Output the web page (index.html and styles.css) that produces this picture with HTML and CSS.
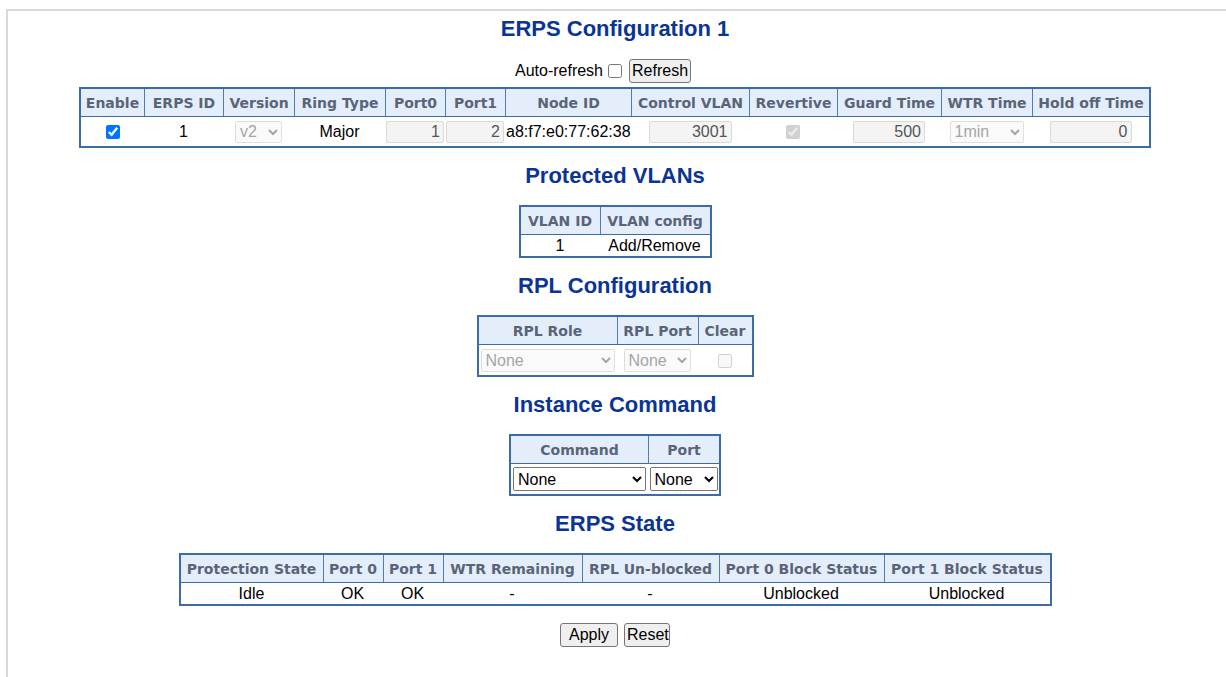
FILE: index.html
```html
<!DOCTYPE html>
<html>
<head>
<meta charset="utf-8">
<title>ERPS Configuration</title>
<link rel="stylesheet" href="styles.css">
</head>
<body>
<div class="frame">
  <h1 class="title">ERPS Configuration 1</h1>
  <div class="refreshbar">
    <span class="lbl">Auto-refresh</span>
    <input type="checkbox" class="cb cb-refresh">
    <button class="btn btn-refresh">Refresh</button>
  </div>

  <table class="grid t-main">
    <thead>
      <tr>
        <th class="c63">Enable</th>
        <th class="c79">ERPS ID</th>
        <th class="c71">Version</th>
        <th class="c91">Ring Type</th>
        <th class="c60">Port0</th>
        <th class="c60">Port1</th>
        <th class="c126">Node ID</th>
        <th class="c118">Control VLAN</th>
        <th class="c88">Revertive</th>
        <th class="c104">Guard Time</th>
        <th class="c91">WTR Time</th>
        <th class="c117">Hold off Time</th>
      </tr>
    </thead>
    <tbody>
      <tr>
        <td><input type="checkbox" class="cb" checked></td>
        <td>1</td>
        <td><select class="sel s-ver" disabled><option>v2</option></select></td>
        <td>Major</td>
        <td><input type="text" class="num n-port" value="1" disabled></td>
        <td><input type="text" class="num n-port" value="2" disabled></td>
        <td>a8:f7:e0:77:62:38</td>
        <td><input type="text" class="num n-vlan" value="3001" disabled></td>
        <td><input type="checkbox" class="cb" checked disabled></td>
        <td><input type="text" class="num n-guard" value="500" disabled></td>
        <td><select class="sel s-wtr" disabled><option>1min</option></select></td>
        <td><input type="text" class="num n-hold" value="0" disabled></td>
      </tr>
    </tbody>
  </table>

  <h1 class="sect">Protected VLANs</h1>
  <table class="grid t-vlan">
    <thead>
      <tr>
        <th class="c79">VLAN ID</th>
        <th class="c110">VLAN config</th>
      </tr>
    </thead>
    <tbody>
      <tr>
        <td>1</td>
        <td>Add/Remove</td>
      </tr>
    </tbody>
  </table>

  <h1 class="sect">RPL Configuration</h1>
  <table class="grid t-rpl">
    <thead>
      <tr>
        <th class="c138">RPL Role</th>
        <th class="c81">RPL Port</th>
        <th class="c54">Clear</th>
      </tr>
    </thead>
    <tbody>
      <tr>
        <td><select class="sel s-role" disabled><option>None</option></select></td>
        <td><select class="sel s-rport" disabled><option>None</option></select></td>
        <td><input type="checkbox" class="cb" disabled></td>
      </tr>
    </tbody>
  </table>

  <h1 class="sect">Instance Command</h1>
  <table class="grid t-cmd">
    <thead>
      <tr>
        <th class="c137">Command</th>
        <th class="c71">Port</th>
      </tr>
    </thead>
    <tbody>
      <tr>
        <td><select class="sel s-cmd"><option>None</option></select></td>
        <td><select class="sel s-cport"><option>None</option></select></td>
      </tr>
    </tbody>
  </table>

  <h1 class="sect">ERPS State</h1>
  <table class="grid t-state">
    <thead>
      <tr>
        <th class="c142">Protection State</th>
        <th class="c60">Port 0</th>
        <th class="c60">Port 1</th>
        <th class="c139">WTR Remaining</th>
        <th class="c137">RPL Un-blocked</th>
        <th class="c165">Port 0 Block Status</th>
        <th class="c166">Port 1 Block Status</th>
      </tr>
    </thead>
    <tbody>
      <tr>
        <td>Idle</td>
        <td>OK</td>
        <td>OK</td>
        <td>-</td>
        <td>-</td>
        <td>Unblocked</td>
        <td>Unblocked</td>
      </tr>
    </tbody>
  </table>

  <div class="actions">
    <button class="btn btn-apply">Apply</button>
    <button class="btn btn-reset">Reset</button>
  </div>
</div>
</body>
</html>
```

FILE: styles.css
```css
html, body {
  margin: 0;
  padding: 0;
  overflow: hidden;
  background: #ffffff;
}

body {
  font-family: "Liberation Sans", Arial, sans-serif;
  font-size: 16px;
  color: #000000;
}

.frame {
  margin: 9px 0 0 6px;
  width: 1214px;
  height: 666px;
  padding-right: 4px;
  border-top: 2px solid #d9d9d9;
  border-left: 2px solid #d9d9d9;
}

h1 {
  font-family: "Liberation Sans", Arial, sans-serif;
  font-weight: bold;
  font-size: 22px;
  line-height: 26px;
  color: #0a3495;
  text-align: center;
}

.title {
  margin: 5px 0 0 0;
}

.sect {
  margin: 15px 0 16px 0;
}

.refreshbar {
  display: flex;
  justify-content: center;
  align-items: center;
  height: 24px;
  margin: 17px 0 4px 0;
  padding-right: 24px;
}

.refreshbar .lbl {
  margin-right: 5px;
}

.cb {
  width: 14px;
  height: 14px;
  margin: 0;
  vertical-align: middle;
}

.cb-refresh {
  margin-right: 7px;
}

.btn {
  font-family: "Liberation Sans", Arial, sans-serif;
  font-size: 16px;
  color: #000000;
  background: #efefef;
  border: 1px solid #767676;
  border-radius: 3px;
  height: 24px;
  padding: 0 2px;
  margin: 0;
  line-height: 20px;
}

.btn-refresh { width: 62px; }
.btn-apply { width: 58px; }
.btn-reset { width: 46px; }

.actions {
  display: flex;
  justify-content: center;
  gap: 6px;
  margin-top: 17px;
}

/* tables */
.grid {
  border: 2px solid #3c6ca5;
  border-spacing: 0;
  table-layout: fixed;
  margin: 0 auto;
}

.grid th {
  box-sizing: border-box;
  height: 28px;
  padding: 0 2px;
  background: #e4eefb;
  color: #5a6478;
  font-family: "DejaVu Sans", Verdana, sans-serif;
  font-weight: bold;
  font-size: 14px;
  text-align: center;
  white-space: nowrap;
  border-bottom: 1px solid #3c6ca5;
  border-left: 1px solid #4f7cb1;
}

.grid th:first-child {
  border-left: 0;
}

.grid td {
  box-sizing: border-box;
  padding: 0 1px;
  text-align: center;
  vertical-align: middle;
  white-space: nowrap;
  overflow: hidden;
  line-height: 18px;
}

.t-main { width: 1072px; }
.t-vlan { width: 193px; }
.t-rpl { width: 277px; }
.t-cmd { width: 212px; }
.t-state { width: 873px; }

.t-main td { height: 29px; }
.t-vlan td { height: 21px; }
.t-rpl td { height: 30px; }
.t-cmd td { height: 30px; }
.t-state td { height: 21px; }

.c54 { width: 54px; }
.c60 { width: 60px; }
.c63 { width: 63px; }
.c71 { width: 71px; }
.c79 { width: 79px; }
.c81 { width: 81px; }
.c88 { width: 88px; }
.c91 { width: 91px; }
.c104 { width: 104px; }
.c110 { width: 110px; }
.c117 { width: 117px; }
.c118 { width: 118px; }
.c126 { width: 126px; }
.c137 { width: 137px; }
.c138 { width: 138px; }
.c139 { width: 139px; }
.c142 { width: 142px; }
.c165 { width: 165px; }
.c166 { width: 166px; }

/* form controls */
.num {
  box-sizing: border-box;
  height: 22px;
  margin: 0;
  padding: 0 3px;
  font-family: "Liberation Sans", Arial, sans-serif;
  font-size: 16px;
  text-align: right;
  color: #555555;
  background: #f4f4f4;
  border: 1px solid #d9d9d9;
  border-radius: 2px;
  vertical-align: middle;
}

.n-port { width: 58px; }
.n-vlan { width: 83px; }
.n-guard { width: 72px; }
.n-hold { width: 82px; }

.sel {
  box-sizing: border-box;
  height: 22px;
  margin: 0;
  font-family: "Liberation Sans", Arial, sans-serif;
  font-size: 16px;
  vertical-align: middle;
}

.s-ver { width: 47px; }
.s-wtr { width: 74px; }
.s-role { width: 134px; height: 23px; }
.s-rport { width: 67px; height: 23px; }
.s-cmd { width: 133px; height: 24px; color: #000000; }
.s-cport { width: 68px; height: 24px; color: #000000; }
```
